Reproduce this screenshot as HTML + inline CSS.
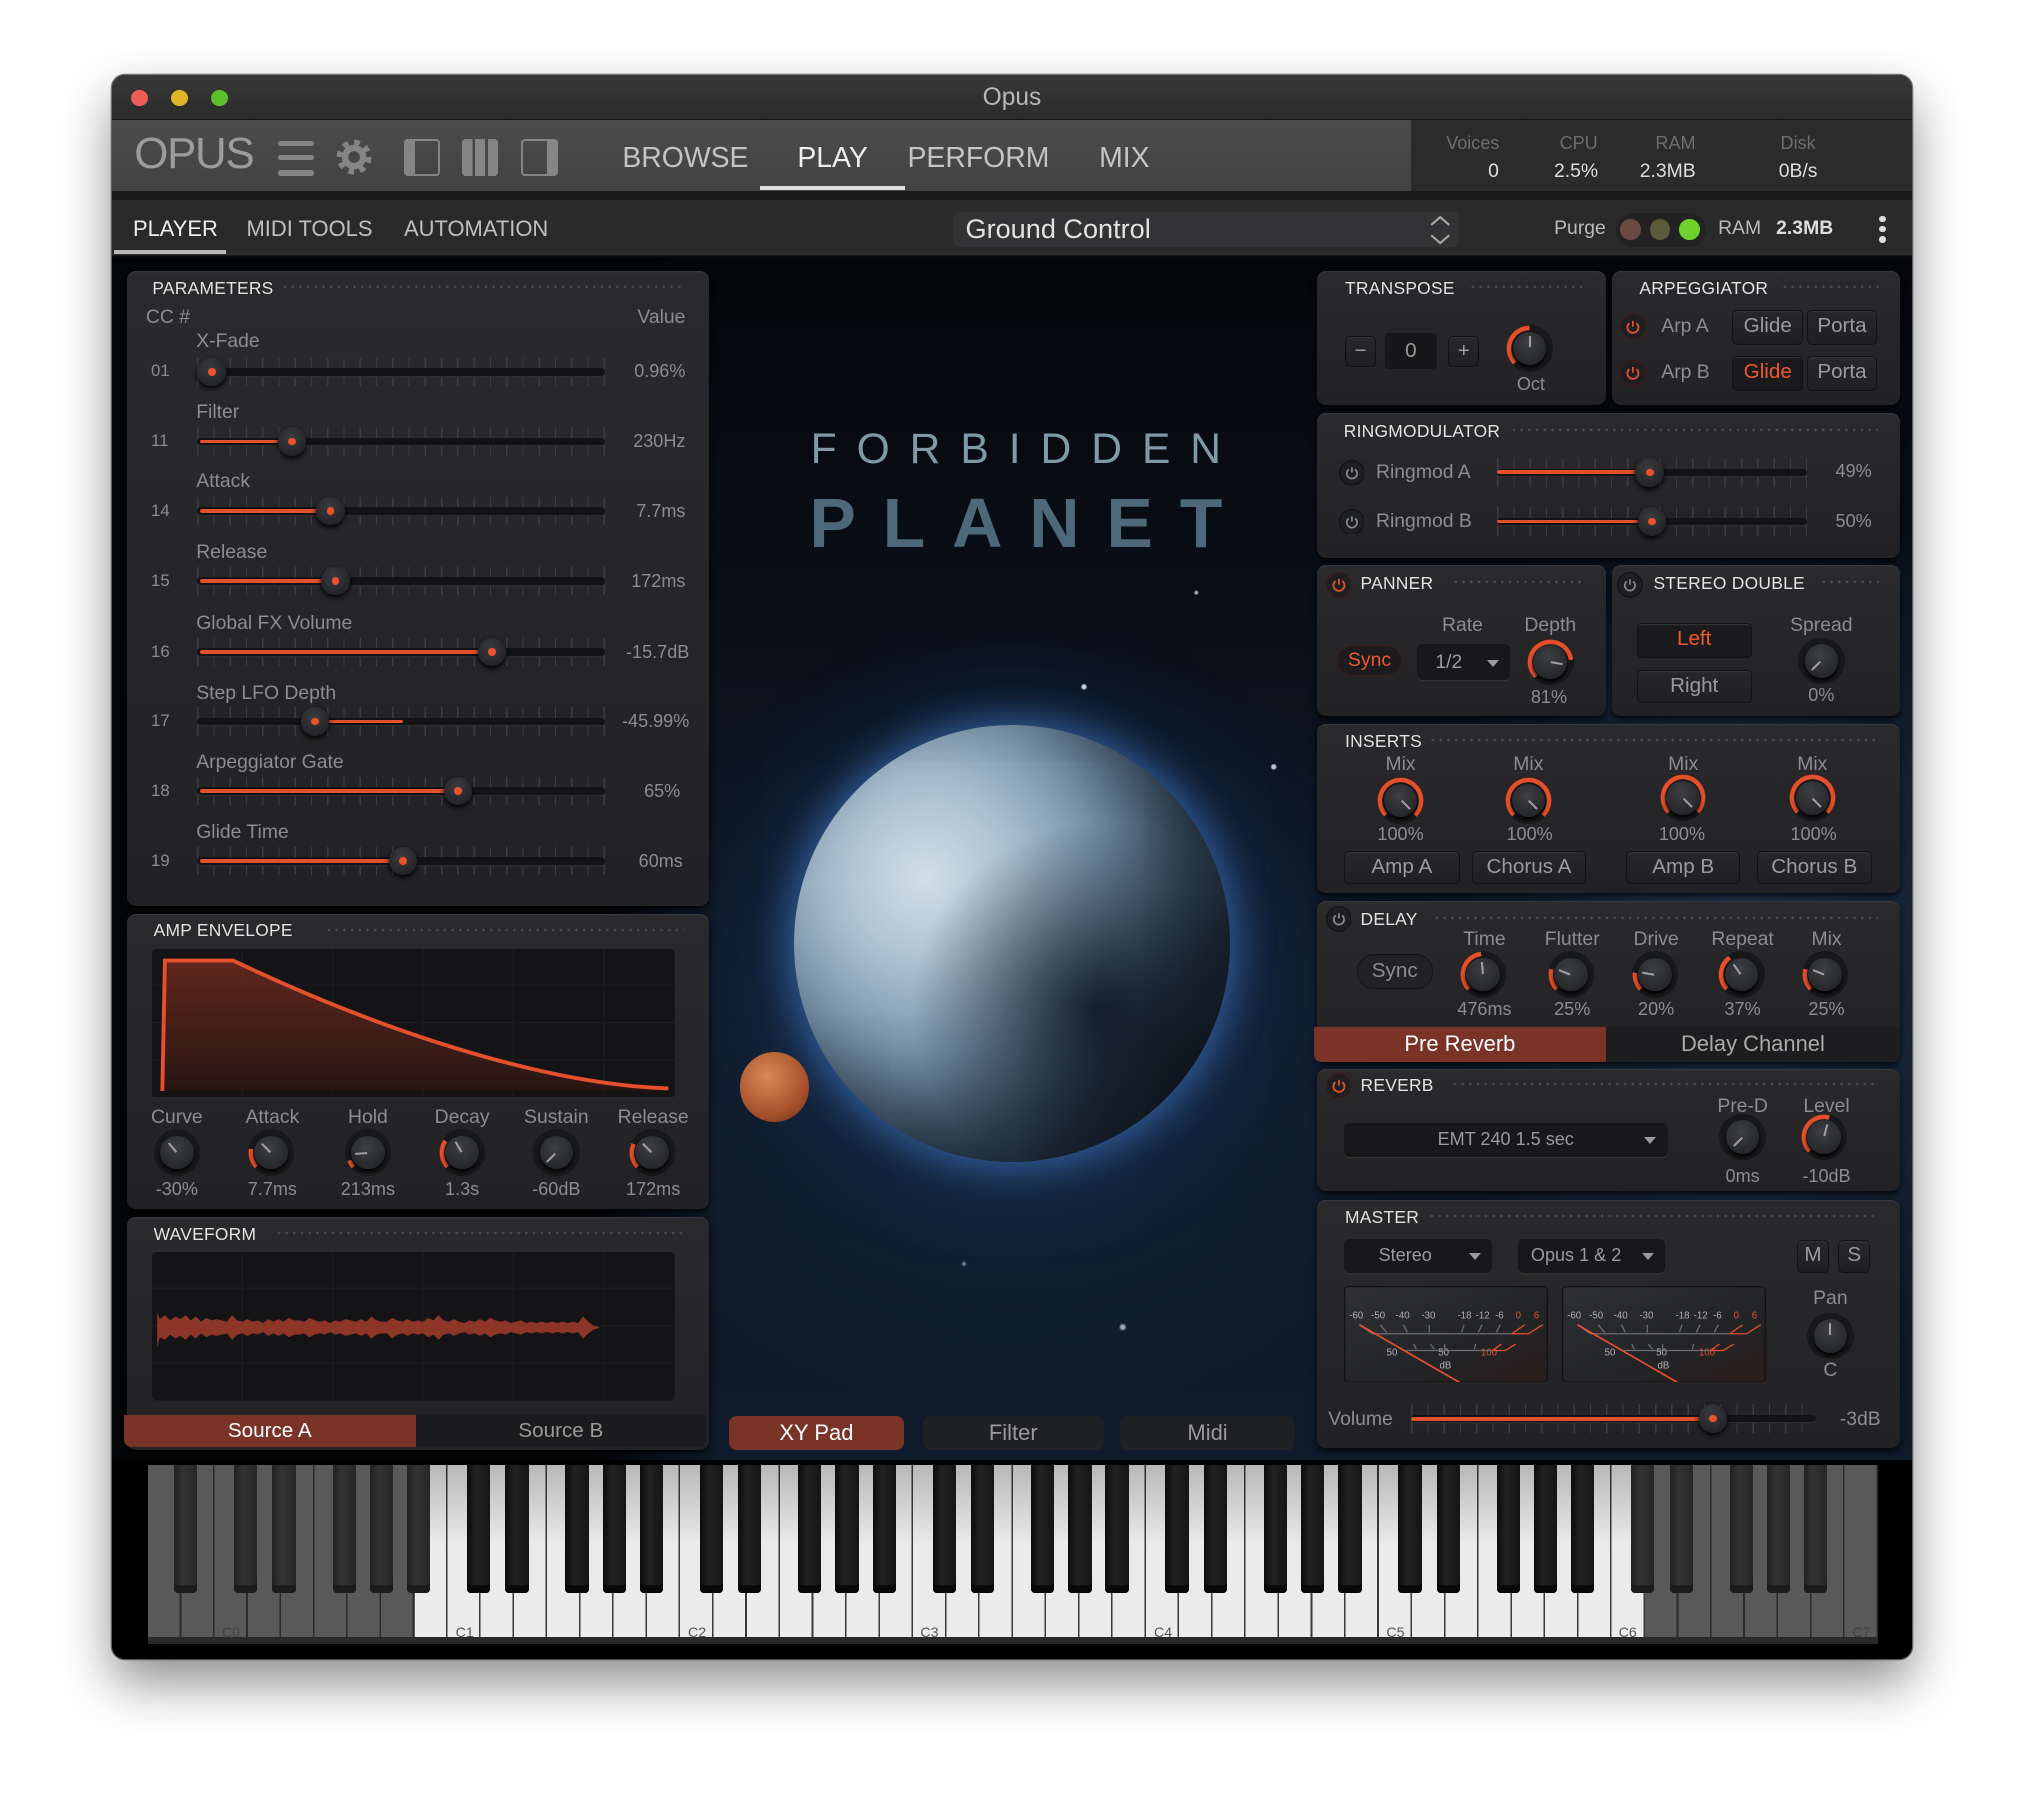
<!DOCTYPE html>
<html><head><meta charset="utf-8">
<style>
*{box-sizing:border-box}
html,body{margin:0;padding:0;background:#fff;overflow:hidden;width:2024px;height:1808px}
#r{zoom:1.29082;width:1568px;height:1401px;position:relative;font-family:"Liberation Sans",sans-serif}
.a{position:absolute}
.c{position:absolute;transform:translateX(-50%);white-space:nowrap}
.rt{position:absolute;transform:translateX(-100%);white-space:nowrap}
.win{left:87px;top:58px;width:1394px;height:1227px;border-radius:10px;overflow:hidden;background:#0a0b0e;box-shadow:0 18px 40px rgba(0,0,0,.45),0 0 0 1px rgba(0,0,0,.5)}
.p{position:absolute;background:linear-gradient(#2a2a2d,#222225);border-radius:7px;box-shadow:inset 0 1px 0 #38383c,0 2px 5px rgba(0,0,0,.8)}
.t{position:absolute;font-size:13.5px;color:#e2e2e2;white-space:nowrap;letter-spacing:.2px}
.d{position:absolute;height:6px;background:radial-gradient(circle,#4a4a50 0.8px,transparent 1.3px) 0 0/6px 6px}
.l{color:#8c8c92;font-size:15px}
.v{color:#8c8c92;font-size:14px}
.sl{position:absolute;height:24px}
.sl .tk{position:absolute;left:0;right:0;top:1px;height:22px;background:repeating-linear-gradient(90deg,#3c3c42 0 1px,transparent 1px 12.6px)}
.sl .tr{position:absolute;left:0;right:0;top:9px;height:6px;background:#131315;border-radius:3px;box-shadow:0 1px 0 #2e2e32}
.sl .fi{position:absolute;top:10.5px;height:3px;background:#e2502c;border-radius:2px}
.sl .th{position:absolute;top:1px;width:22px;height:22px;border-radius:50%;background:radial-gradient(circle at 45% 35%,#3b3c41,#222326 75%);box-shadow:0 2px 4px #000}
.sl .th::after{content:"";position:absolute;left:8px;top:8px;width:6px;height:6px;border-radius:50%;background:#e8522c}
.k{position:absolute;width:36px;height:36px;margin:-18px 0 0 -18px;border-radius:50%;background:#17181a}
.k::before{content:"";position:absolute;inset:0;border-radius:50%;background:conic-gradient(from 225deg,#e4502c 0 var(--v),transparent var(--v) 360deg);-webkit-mask:radial-gradient(closest-side,transparent 76%,#000 79%,#000 95%,transparent 100%);mask:radial-gradient(closest-side,transparent 76%,#000 79%,#000 95%,transparent 100%)}
.k::after{content:"";position:absolute;inset:5px;border-radius:50%;background:radial-gradient(circle at 45% 35%,#3e3f44,#26272a 72%);box-shadow:0 2px 3px #000}
.k i{position:absolute;left:17.25px;top:8px;width:1.5px;height:9px;background:#a0a0a6;transform-origin:50% 10px;transform:rotate(var(--r));z-index:1}
.b{position:absolute;background:linear-gradient(#27272a,#202023);border:1px solid #121214;border-radius:4px;color:#9a9aa0;font-size:16px;text-align:center;box-shadow:inset 0 1px 0 #333337}
.dd{position:absolute;background:#18181a;border-radius:4px;color:#9a9aa0;font-size:14px;text-align:center;box-shadow:0 1px 0 #333}
.dd::after{content:"";position:absolute;right:9px;top:50%;margin-top:-2px;border:5px solid transparent;border-top:6px solid #9a9aa0;border-bottom:0}
.wk{position:absolute;top:0;height:139px}
.bk{position:absolute;top:0;width:18px;height:99px;border-radius:0 0 3px 3px;background:linear-gradient(90deg,#0c0c0c,#222 40%,#151515);box-shadow:inset 0 -6px 0 #080808}
.bk.g{background:linear-gradient(90deg,#222,#333 40%,#262626);box-shadow:inset 0 -6px 0 #1c1c1c}
.cl{position:absolute;bottom:3px;font-size:11px;color:#555}
</style></head><body><div id="r">

<div class="a win">
<div class="a" style="left:0;top:0;width:1394px;height:35px;background:linear-gradient(#383838,#2b2b2b);border-bottom:1px solid #151515"></div>
<div class="a" style="left:14.5px;top:11.5px;width:13px;height:13px;border-radius:50%;background:#ec5f56"></div>
<div class="a" style="left:45.5px;top:11.5px;width:13px;height:13px;border-radius:50%;background:#dfb62a"></div>
<div class="a" style="left:76.5px;top:11.5px;width:13px;height:13px;border-radius:50%;background:#5cbd2d"></div>
<div class="c" style="left:697px;top:7px;font-size:19px;color:#b8b8b8">Opus</div>

<div class="a" style="left:0;top:35px;width:1006px;height:55px;background:linear-gradient(#4c4c4c,#424242)"></div>
<div class="a" style="left:1006px;top:35px;width:388px;height:55px;background:#2b2b2b"></div>
<div class="a" style="left:17px;top:42px;font-size:34px;color:#9c9c9c;letter-spacing:-1px">OPUS</div>
<div class="a" style="left:128px;top:51px;width:28px;height:4px;border-radius:2px;background:#858585"></div>
<div class="a" style="left:128px;top:62px;width:28px;height:4px;border-radius:2px;background:#858585"></div>
<div class="a" style="left:128px;top:74px;width:28px;height:4px;border-radius:2px;background:#858585"></div>
<svg class="a" style="left:173px;top:50px" width="28" height="28" viewBox="-14 -14 28 28"><circle r="11" fill="none" stroke="#858585" stroke-width="5" stroke-dasharray="4.2 4.44"/><circle r="9.5" fill="#858585"/><circle r="4.5" fill="#464646"/></svg>
<div class="a" style="left:226px;top:50px;width:28px;height:28px;border:2px solid #858585;border-radius:3px;border-left:9px solid #858585"></div>
<div class="a" style="left:271px;top:50px;width:28px;height:28px;border-radius:3px;background:linear-gradient(90deg,#858585 0 8px,#464646 8px 10px,#858585 10px 18px,#464646 18px 20px,#858585 20px)"></div>
<div class="a" style="left:317px;top:50px;width:28px;height:28px;border:2px solid #858585;border-radius:3px;border-right:9px solid #858585"></div>
<div class="c" style="left:444px;top:52px;font-size:22px;color:#c4c4c4">BROWSE</div>
<div class="c" style="left:558px;top:52px;font-size:22px;color:#eee">PLAY</div>
<div class="c" style="left:671px;top:52px;font-size:22px;color:#c4c4c4">PERFORM</div>
<div class="c" style="left:784px;top:52px;font-size:22px;color:#c4c4c4">MIX</div>
<div class="a" style="left:502px;top:86px;width:112px;height:3px;background:#ddd"></div>
<div class="c" style="left:1054px;top:45px;font-size:14px;color:#6e6e6e">Voices</div>
<div class="c" style="left:1136px;top:45px;font-size:14px;color:#6e6e6e">CPU</div>
<div class="c" style="left:1211px;top:45px;font-size:14px;color:#6e6e6e">RAM</div>
<div class="c" style="left:1306px;top:45px;font-size:14px;color:#6e6e6e">Disk</div>
<div class="c" style="left:1070px;top:66px;font-size:15px;color:#ddd">0</div>
<div class="c" style="left:1134px;top:66px;font-size:15px;color:#ddd">2.5%</div>
<div class="c" style="left:1205px;top:66px;font-size:15px;color:#ddd">2.3MB</div>
<div class="c" style="left:1306px;top:66px;font-size:15px;color:#ddd">0B/s</div>

<div class="a" style="left:0;top:90px;width:1394px;height:7px;background:#1b1b1b"></div>
<div class="a" style="left:0;top:97px;width:1394px;height:43px;background:#2a2a2a;border-bottom:1px solid #1a1a1a"></div>
<div class="a" style="left:16px;top:109px;font-size:17px;color:#eee">PLAYER</div>
<div class="a" style="left:104px;top:109px;font-size:17px;color:#c0c0c0">MIDI TOOLS</div>
<div class="a" style="left:226px;top:109px;font-size:17px;color:#c0c0c0">AUTOMATION</div>
<div class="a" style="left:1px;top:136px;width:87px;height:3px;background:#bbb"></div>
<div class="a" style="left:651px;top:106px;width:392px;height:27px;background:#333335;border-radius:5px"></div>
<div class="a" style="left:661px;top:107px;font-size:21px;color:#e2e2e2">Ground Control</div>
<svg class="a" style="left:1018px;top:106px" width="22" height="28"><path d="M4 10l7-6 7 6M4 18l7 6 7-6" fill="none" stroke="#aaa" stroke-width="1.6"/></svg>
<div class="a" style="left:1117px;top:110px;font-size:15px;color:#bbb">Purge</div>
<div class="a" style="left:1165px;top:107px;width:70px;height:26px;border-radius:13px;background:#222"></div>
<div class="a" style="left:1168px;top:112px;width:16px;height:16px;border-radius:50%;background:#6b4a42"></div>
<div class="a" style="left:1191px;top:112px;width:16px;height:16px;border-radius:50%;background:#5b5a3a"></div>
<div class="a" style="left:1214px;top:112px;width:16px;height:16px;border-radius:50%;background:#6fd12a"></div>
<div class="a" style="left:1244px;top:110px;font-size:15px;color:#bbb">RAM</div>
<div class="a" style="left:1289px;top:110px;font-size:15px;color:#ddd;font-weight:bold">2.3MB</div>
<div class="a" style="left:1369px;top:109px;width:5px;height:5px;border-radius:50%;background:#ddd"></div>
<div class="a" style="left:1369px;top:117px;width:5px;height:5px;border-radius:50%;background:#ddd"></div>
<div class="a" style="left:1369px;top:125px;width:5px;height:5px;border-radius:50%;background:#ddd"></div>

<div class="a" style="left:0;top:141px;width:1394px;height:932px;background:radial-gradient(ellipse 380px 520px at 1260px 520px,rgba(70,110,160,.35),transparent 70%),radial-gradient(ellipse 500px 400px at 700px 600px,rgba(40,70,110,.35),transparent 75%),linear-gradient(#05070a,#0c1420 45%,#0f1b2b 100%)"></div>
<div class="a" style="left:0;top:141px;width:470px;height:932px;background:linear-gradient(90deg,#050608 80%,rgba(5,6,8,0))"></div>
<div class="a" style="left:0;top:141px;width:1394px;height:932px;background:radial-gradient(circle at 753px 333px,#cde 1.5px,transparent 2.5px),radial-gradient(circle at 700px 408px,#9bd 1.5px,transparent 2.5px),radial-gradient(circle at 900px 395px,#bcd 1.5px,transparent 2.5px),radial-gradient(circle at 940px 452px,#cde 1.5px,transparent 2.5px),radial-gradient(circle at 783px 829px,#9ab 1.5px,transparent 3px),radial-gradient(circle at 660px 780px,#789 1px,transparent 2px),radial-gradient(circle at 840px 260px,#9ab 1px,transparent 2px);"></div>
<div class="a" style="left:541px;top:271px;width:318px;display:flex;justify-content:space-between;font-size:33px;color:#7f99a7"><span>F</span><span>O</span><span>R</span><span>B</span><span>I</span><span>D</span><span>D</span><span>E</span><span>N</span></div>
<div class="a" style="left:540px;top:316px;width:320px;display:flex;justify-content:space-between;font-size:54px;color:#4d6879;font-weight:bold"><span>P</span><span>L</span><span>A</span><span>N</span><span>E</span><span>T</span></div>
<div class="a" style="left:528px;top:504px;width:338px;height:338px;border-radius:50%;background:radial-gradient(circle at 70% 65%,rgba(10,18,30,.85),rgba(10,18,30,0) 45%),radial-gradient(circle at 30% 35%,#d3dee6 0%,#a9bfcf 22%,#7893a9 42%,#445c73 62%,#1f2e40 82%,#142233 100%);box-shadow:0 0 26px 6px rgba(70,130,210,.55),0 0 70px 20px rgba(40,90,170,.25),inset -40px -30px 70px rgba(0,0,0,.5)"></div>
<div class="a" style="left:486px;top:757px;width:54px;height:54px;border-radius:50%;background:radial-gradient(circle at 40% 35%,#d88a55,#a9522d 60%,#6a2c17)"></div>
<div class="a" style="left:478px;top:1039px;width:135px;height:26px;border-radius:6px;background:#7a3427;color:#fff;font-size:17px;text-align:center;line-height:26px">XY Pad</div>
<div class="a" style="left:628px;top:1039px;width:140px;height:26px;border-radius:6px;background:#1f2023;color:#999;font-size:17px;text-align:center;line-height:26px">Filter</div>
<div class="a" style="left:781px;top:1039px;width:135px;height:26px;border-radius:6px;background:#1f2023;color:#999;font-size:17px;text-align:center;line-height:26px">Midi</div>

<div class="a" style="left:0;top:1073px;width:1394px;height:154px;background:#000"></div>
<div class="a" style="left:28px;top:1077px;width:1340px;height:139px;overflow:hidden">
 <div class="wk" style="left:0;width:1340px;background:repeating-linear-gradient(90deg,#ebebeb 0 24.57px,#3a3a3a 24.57px 25.77px)"></div>
 <div class="wk" style="left:0;width:1340px;background:linear-gradient(180deg,rgba(0,0,0,.22),rgba(0,0,0,0) 45%)"></div>
 <div class="wk" style="left:0;width:206.2px;background:repeating-linear-gradient(90deg,#595959 0 24.57px,#2a2a2a 24.57px 25.77px)"></div>
 <div class="wk" style="left:1159.7px;width:181px;background:repeating-linear-gradient(90deg,#595959 0 24.57px,#2a2a2a 24.57px 25.77px)"></div>
 <div class="a" style="left:0;top:133px;width:1340px;height:6px;background:#2a2a2a"></div>
 <div class="cl" style="left:57px;color:#444">C0</div><div class="cl" style="left:238px">C1</div><div class="cl" style="left:418px">C2</div><div class="cl" style="left:598px">C3</div><div class="cl" style="left:779px">C4</div><div class="cl" style="left:959px">C5</div><div class="cl" style="left:1139px">C6</div><div class="cl" style="left:1320px;color:#444">C7</div>
 <div class="bk g" style="left:19.8px"></div>
 <div class="bk g" style="left:66.3px"></div><div class="bk g" style="left:96.1px"></div><div class="bk g" style="left:142.6px"></div><div class="bk g" style="left:171.4px"></div><div class="bk g" style="left:200.2px"></div>
 <div class="bk" style="left:246.7px"></div><div class="bk" style="left:276.5px"></div><div class="bk" style="left:323px"></div><div class="bk" style="left:351.8px"></div><div class="bk" style="left:380.6px"></div>
 <div class="bk" style="left:427.1px"></div><div class="bk" style="left:456.9px"></div><div class="bk" style="left:503.4px"></div><div class="bk" style="left:532.2px"></div><div class="bk" style="left:561px"></div>
 <div class="bk" style="left:607.5px"></div><div class="bk" style="left:637.3px"></div><div class="bk" style="left:683.8px"></div><div class="bk" style="left:712.6px"></div><div class="bk" style="left:741.4px"></div>
 <div class="bk" style="left:787.9px"></div><div class="bk" style="left:817.7px"></div><div class="bk" style="left:864.2px"></div><div class="bk" style="left:893px"></div><div class="bk" style="left:921.8px"></div>
 <div class="bk" style="left:968.3px"></div><div class="bk" style="left:998.1px"></div><div class="bk" style="left:1044.6px"></div><div class="bk" style="left:1073.4px"></div><div class="bk" style="left:1102.2px"></div>
 <div class="bk g" style="left:1148.7px"></div><div class="bk g" style="left:1178.5px"></div><div class="bk g" style="left:1225px"></div><div class="bk g" style="left:1253.8px"></div><div class="bk g" style="left:1282.6px"></div>
</div>
</div>

<div class="p" style="left:98px;top:210px;width:451px;height:492px"></div>
<div class="t" style="left:118px;top:215px">PARAMETERS</div><div class="d" style="left:218px;top:219px;width:312px"></div>
<div class="a l" style="left:113px;top:237px">CC #</div><div class="rt l" style="left:531px;top:237px">Value</div>

<div class="a l" style="left:152px;top:256px">X-Fade</div>
<div class="a l" style="left:152px;top:311px">Filter</div>
<div class="a l" style="left:152px;top:364px">Attack</div>
<div class="a l" style="left:152px;top:419px">Release</div>
<div class="a l" style="left:152px;top:474px">Global FX Volume</div>
<div class="a l" style="left:152px;top:528px">Step LFO Depth</div>
<div class="a l" style="left:152px;top:582px">Arpeggiator Gate</div>
<div class="a l" style="left:152px;top:636px">Glide Time</div>

<div class="a v" style="left:117px;top:280px;font-size:13px">01</div>
<div class="a v" style="left:117px;top:334px;font-size:13px">11</div>
<div class="a v" style="left:117px;top:388px;font-size:13px">14</div>
<div class="a v" style="left:117px;top:442px;font-size:13px">15</div>
<div class="a v" style="left:117px;top:497px;font-size:13px">16</div>
<div class="a v" style="left:117px;top:551px;font-size:13px">17</div>
<div class="a v" style="left:117px;top:605px;font-size:13px">18</div>
<div class="a v" style="left:117px;top:659px;font-size:13px">19</div>

<div class="rt v" style="left:531px;top:280px">0.96%</div>
<div class="rt v" style="left:531px;top:334px">230Hz</div>
<div class="rt v" style="left:531px;top:388px">7.7ms</div>
<div class="rt v" style="left:531px;top:442px">172ms</div>
<div class="rt v" style="left:534px;top:497px">-15.7dB</div>
<div class="rt v" style="left:534px;top:551px">-45.99%</div>
<div class="rt v" style="left:527px;top:605px">65%</div>
<div class="rt v" style="left:529px;top:659px">60ms</div>

<div class="sl" style="left:153px;top:276px;width:316px"><div class="tk"></div><div class="tr"></div><div class="th" style="left:0px"></div></div>
<div class="sl" style="left:153px;top:330px;width:316px"><div class="tk"></div><div class="tr"></div><div class="fi" style="left:2px;width:71px"></div><div class="th" style="left:62px"></div></div>
<div class="sl" style="left:153px;top:384px;width:316px"><div class="tk"></div><div class="tr"></div><div class="fi" style="left:2px;width:101px"></div><div class="th" style="left:92px"></div></div>
<div class="sl" style="left:153px;top:438px;width:316px"><div class="tk"></div><div class="tr"></div><div class="fi" style="left:2px;width:105px"></div><div class="th" style="left:96px"></div></div>
<div class="sl" style="left:153px;top:493px;width:316px"><div class="tk"></div><div class="tr"></div><div class="fi" style="left:2px;width:226px"></div><div class="th" style="left:217px"></div></div>
<div class="sl" style="left:153px;top:547px;width:316px"><div class="tk"></div><div class="tr"></div><div class="fi" style="left:91px;width:68px"></div><div class="th" style="left:80px"></div></div>
<div class="sl" style="left:153px;top:601px;width:316px"><div class="tk"></div><div class="tr"></div><div class="fi" style="left:2px;width:200px"></div><div class="th" style="left:191px"></div></div>
<div class="sl" style="left:153px;top:655px;width:316px"><div class="tk"></div><div class="tr"></div><div class="fi" style="left:2px;width:157px"></div><div class="th" style="left:148px"></div></div>

<div class="p" style="left:98px;top:708px;width:451px;height:229px"></div>
<div class="t" style="left:119px;top:713px">AMP ENVELOPE</div><div class="d" style="left:252px;top:717px;width:278px"></div>
<svg class="a" style="left:118px;top:735px" width="405" height="115"><defs><linearGradient id="eg" x1="0" y1="0" x2="0" y2="1"><stop offset="0" stop-color="#6e2a1e"/><stop offset="1" stop-color="#2a1512"/></linearGradient></defs><rect width="405" height="115" rx="3" fill="#141416"/><path d="M70 0V115M140 0V115M210 0V115M280 0V115M350 0V115M0 28H405M0 57H405M0 86H405" stroke="#1d1d20"/><path d="M8 110L10 9H63C170 60 300 105 400 108V110Z" fill="url(#eg)" opacity=".85"/><path d="M8 110L10 9H63C170 60 300 105 400 108" fill="none" stroke="#e4502c" stroke-width="3"/></svg>
<div class="c l" style="left:137px;top:857px">Curve</div><div class="c l" style="left:211px;top:857px">Attack</div><div class="c l" style="left:285px;top:857px">Hold</div><div class="c l" style="left:358px;top:857px">Decay</div><div class="c l" style="left:431px;top:857px">Sustain</div><div class="c l" style="left:506px;top:857px">Release</div>
<div class="k" style="left:137px;top:893px;--v:0deg;--r:-40deg"><i></i></div>
<div class="k" style="left:210px;top:893px;--v:55deg;--r:-45deg"><i></i></div>
<div class="k" style="left:285px;top:893px;--v:22deg;--r:-95deg"><i></i></div>
<div class="k" style="left:358px;top:893px;--v:80deg;--r:-30deg"><i></i></div>
<div class="k" style="left:431px;top:893px;--v:0deg;--r:-135deg"><i></i></div>
<div class="k" style="left:505px;top:893px;--v:70deg;--r:-45deg"><i></i></div>
<div class="c v" style="left:137px;top:913px">-30%</div><div class="c v" style="left:211px;top:913px">7.7ms</div><div class="c v" style="left:285px;top:913px">213ms</div><div class="c v" style="left:358px;top:913px">1.3s</div><div class="c v" style="left:431px;top:913px">-60dB</div><div class="c v" style="left:506px;top:913px">172ms</div>

<div class="p" style="left:98px;top:943px;width:451px;height:180px"></div>
<div class="t" style="left:119px;top:948px">WAVEFORM</div><div class="d" style="left:213px;top:952px;width:317px"></div>
<svg class="a" style="left:118px;top:970px" width="405" height="115"><rect width="405" height="115" rx="3" fill="#141416"/><path d="M70 0V115M140 0V115M210 0V115M280 0V115M350 0V115M0 28H405M0 57H405M0 86H405" stroke="#1c1c1f"/>
<path d="M4 47L6 52L10 49L14 53L18 50L22 52L26 49L30 53L34 50L38 54L42 51L46 53L50 52L54 53L58 54L62 49L66 53L70 54L74 52L78 54L82 53L86 55L90 52L94 54L98 52L102 54L106 51L110 53L114 53L118 54L122 51L126 53L130 54L134 53L138 55L142 53L146 54L150 52L154 53L158 54L162 52L166 54L170 50L174 53L178 54L182 54L186 51L190 53L194 54L198 52L202 54L206 53L210 54L214 51L218 53L222 49L226 53L230 54L234 52L238 54L242 55L246 53L250 54L254 52L258 54L262 51L266 53L270 54L274 53L278 55L282 54L286 53L290 55L294 54L298 55L302 54L306 55L310 54L314 55L318 54L322 55L326 54L330 55L334 50L338 54L342 57L346 58L346 59L342 60L338 63L334 67L330 62L326 63L322 62L318 63L314 62L310 63L306 62L302 63L298 62L294 63L290 62L286 64L282 63L278 62L274 64L270 63L266 64L262 66L258 63L254 65L250 63L246 64L242 62L238 63L234 65L230 63L226 64L222 68L218 64L214 66L210 63L206 64L202 63L198 65L194 63L190 64L186 67L182 63L178 63L174 64L170 67L166 63L162 65L158 63L154 64L150 65L146 63L142 64L138 62L134 64L130 63L126 64L122 66L118 63L114 64L110 64L106 66L102 63L98 65L94 63L90 65L86 62L82 64L78 63L74 65L70 63L66 64L62 68L58 63L54 64L50 65L46 64L42 66L38 63L34 67L30 64L26 68L22 65L18 67L14 64L10 68L6 66L4 74Z" fill="#8d3526"/></svg>
<div class="a" style="left:96px;top:1096px;width:226px;height:25px;background:#7a3427;border-radius:0 0 0 6px;color:#fff;font-size:16px;text-align:center;line-height:25px">Source A</div>
<div class="a" style="left:322px;top:1096px;width:225px;height:25px;background:#1b1b1d;border-radius:0 0 6px 0;color:#999;font-size:16px;text-align:center;line-height:25px">Source B</div>

<div class="p" style="left:1020px;top:210px;width:224px;height:104px"></div>
<div class="t" style="left:1042px;top:215px">TRANSPOSE</div><div class="d" style="left:1138px;top:219px;width:90px"></div>
<div class="b" style="left:1042px;top:260px;width:24px;height:24px;line-height:21px">−</div>
<div class="a" style="left:1073px;top:258px;width:40px;height:28px;background:#17171a;border-radius:3px;color:#999;font-size:16px;text-align:center;line-height:28px">0</div>
<div class="b" style="left:1122px;top:260px;width:24px;height:24px;line-height:21px">+</div>
<div class="k" style="left:1185px;top:270px;--v:135deg;--r:0deg"><i></i></div>
<div class="c v" style="left:1186px;top:290px">Oct</div>

<div class="p" style="left:1249px;top:210px;width:223px;height:104px"></div>
<div class="t" style="left:1270px;top:215px">ARPEGGIATOR</div><div class="d" style="left:1380px;top:219px;width:78px"></div>
<svg class="a" style="left:1255px;top:243px" width="20" height="20"><circle cx="10" cy="10" r="9.5" fill="#1e1f22" stroke="#3b1a14"/><path d="M7.3 7a4.3 4.3 0 1 0 5.4 0M10 5.3v4.5" stroke="#e4502c" fill="none" stroke-width="1.4"/></svg>
<svg class="a" style="left:1255px;top:279px" width="20" height="20"><circle cx="10" cy="10" r="9.5" fill="#1e1f22" stroke="#3b1a14"/><path d="M7.3 7a4.3 4.3 0 1 0 5.4 0M10 5.3v4.5" stroke="#e4502c" fill="none" stroke-width="1.4"/></svg>
<div class="a l" style="left:1287px;top:244px">Arp A</div><div class="a l" style="left:1287px;top:280px">Arp B</div>
<div class="b" style="left:1342px;top:240px;width:55px;height:27px;line-height:24px">Glide</div>
<div class="b" style="left:1400px;top:240px;width:54px;height:27px;line-height:24px">Porta</div>
<div class="b" style="left:1342px;top:276px;width:55px;height:27px;line-height:24px;color:#ee5a30;background:#1a1a1c">Glide</div>
<div class="b" style="left:1400px;top:276px;width:54px;height:27px;line-height:24px">Porta</div>

<div class="p" style="left:1020px;top:320px;width:452px;height:112px"></div>
<div class="t" style="left:1041px;top:326px">RINGMODULATOR</div><div class="d" style="left:1170px;top:330px;width:285px"></div>
<svg class="a" style="left:1037px;top:356px" width="20" height="20"><circle cx="10" cy="10" r="9.5" fill="#1e1f22" stroke="#121214"/><path d="M7.5 7.3a4 4 0 1 0 5 0M10 5.6v4.2" stroke="#8a8a90" fill="none" stroke-width="1.3"/></svg>
<svg class="a" style="left:1037px;top:394px" width="20" height="20"><circle cx="10" cy="10" r="9.5" fill="#1e1f22" stroke="#121214"/><path d="M7.5 7.3a4 4 0 1 0 5 0M10 5.6v4.2" stroke="#8a8a90" fill="none" stroke-width="1.3"/></svg>
<div class="a l" style="left:1066px;top:357px">Ringmod A</div><div class="a l" style="left:1066px;top:395px">Ringmod B</div>
<div class="sl" style="left:1160px;top:354px;width:240px"><div class="tk"></div><div class="tr"></div><div class="fi" style="left:0;width:118px"></div><div class="th" style="left:107px"></div></div>
<div class="sl" style="left:1160px;top:392px;width:240px"><div class="tk"></div><div class="tr"></div><div class="fi" style="left:0;width:120px"></div><div class="th" style="left:109px"></div></div>
<div class="rt v" style="left:1450px;top:357px">49%</div><div class="rt v" style="left:1450px;top:396px">50%</div>

<div class="p" style="left:1020px;top:438px;width:224px;height:117px"></div>
<svg class="a" style="left:1027px;top:443px" width="20" height="20"><circle cx="10" cy="10" r="9.5" fill="#1e1f22" stroke="#3b1a14"/><path d="M7.3 7a4.3 4.3 0 1 0 5.4 0M10 5.3v4.5" stroke="#e4502c" fill="none" stroke-width="1.4"/></svg>
<div class="t" style="left:1054px;top:444px">PANNER</div><div class="d" style="left:1125px;top:448px;width:104px"></div>
<div class="c l" style="left:1133px;top:476px">Rate</div><div class="c l" style="left:1201px;top:476px">Depth</div>
<div class="a" style="left:1036px;top:500px;width:50px;height:24px;border-radius:12px;background:#1c1c1e;border:1px solid #3a1c15;color:#ee5a30;font-size:15px;text-align:center;line-height:22px">Sync</div>
<div class="dd" style="left:1098px;top:499px;width:72px;height:28px;line-height:28px;text-align:left;padding-left:14px;font-size:15px">1/2</div>
<div class="k" style="left:1201px;top:513px;--v:219deg;--r:100deg"><i></i></div>
<div class="c v" style="left:1200px;top:532px">81%</div>

<div class="p" style="left:1249px;top:438px;width:223px;height:117px"></div>
<svg class="a" style="left:1253px;top:443px" width="20" height="20"><circle cx="10" cy="10" r="9.5" fill="#1e1f22" stroke="#121214"/><path d="M7.5 7.3a4 4 0 1 0 5 0M10 5.6v4.2" stroke="#8a8a90" fill="none" stroke-width="1.3"/></svg>
<div class="t" style="left:1281px;top:444px">STEREO DOUBLE</div><div class="d" style="left:1410px;top:448px;width:48px"></div>
<div class="b" style="left:1268px;top:483px;width:89px;height:27px;line-height:24px;color:#ee5a30;background:#1b1b1d">Left</div>
<div class="b" style="left:1268px;top:519px;width:89px;height:26px;line-height:23px">Right</div>
<div class="c l" style="left:1411px;top:476px">Spread</div>
<div class="k" style="left:1411px;top:512px;--v:0deg;--r:-135deg"><i></i></div>
<div class="c v" style="left:1411px;top:531px">0%</div>

<div class="p" style="left:1020px;top:561px;width:452px;height:131px"></div>
<div class="t" style="left:1042px;top:566px">INSERTS</div><div class="d" style="left:1107px;top:570px;width:348px"></div>
<div class="c l" style="left:1085px;top:583px">Mix</div><div class="c l" style="left:1184px;top:583px">Mix</div><div class="c l" style="left:1304px;top:583px">Mix</div><div class="c l" style="left:1404px;top:583px">Mix</div>
<div class="k" style="left:1085px;top:620px;--v:270deg;--r:135deg"><i></i></div>
<div class="k" style="left:1184px;top:620px;--v:270deg;--r:135deg"><i></i></div>
<div class="k" style="left:1304px;top:618px;--v:270deg;--r:135deg"><i></i></div>
<div class="k" style="left:1404px;top:618px;--v:270deg;--r:135deg"><i></i></div>
<div class="c v" style="left:1085px;top:638px">100%</div><div class="c v" style="left:1185px;top:638px">100%</div><div class="c v" style="left:1303px;top:638px">100%</div><div class="c v" style="left:1405px;top:638px">100%</div>
<div class="b" style="left:1041px;top:659px;width:90px;height:26px;line-height:23px">Amp A</div>
<div class="b" style="left:1140px;top:659px;width:89px;height:26px;line-height:23px">Chorus A</div>
<div class="b" style="left:1260px;top:659px;width:88px;height:26px;line-height:23px">Amp B</div>
<div class="b" style="left:1361px;top:659px;width:89px;height:26px;line-height:23px">Chorus B</div>

<div class="p" style="left:1020px;top:698px;width:452px;height:125px"></div>
<svg class="a" style="left:1027px;top:702px" width="20" height="20"><circle cx="10" cy="10" r="9.5" fill="#1e1f22" stroke="#121214"/><path d="M7.5 7.3a4 4 0 1 0 5 0M10 5.6v4.2" stroke="#8a8a90" fill="none" stroke-width="1.3"/></svg>
<div class="t" style="left:1054px;top:704px">DELAY</div><div class="d" style="left:1110px;top:708px;width:345px"></div>
<div class="a" style="left:1051px;top:739px;width:59px;height:27px;border-radius:13px;background:#222225;border:1px solid #141416;color:#8c8c92;font-size:16px;text-align:center;line-height:25px">Sync</div>
<div class="c l" style="left:1150px;top:719px">Time</div><div class="c l" style="left:1218px;top:719px">Flutter</div><div class="c l" style="left:1283px;top:719px">Drive</div><div class="c l" style="left:1350px;top:719px">Repeat</div><div class="c l" style="left:1415px;top:719px">Mix</div>
<div class="k" style="left:1149px;top:755px;--v:130deg;--r:-5deg"><i></i></div>
<div class="k" style="left:1217px;top:755px;--v:60deg;--r:-68deg"><i></i></div>
<div class="k" style="left:1282px;top:755px;--v:50deg;--r:-80deg"><i></i></div>
<div class="k" style="left:1349px;top:755px;--v:100deg;--r:-35deg"><i></i></div>
<div class="k" style="left:1414px;top:755px;--v:60deg;--r:-68deg"><i></i></div>
<div class="c v" style="left:1150px;top:774px">476ms</div><div class="c v" style="left:1218px;top:774px">25%</div><div class="c v" style="left:1283px;top:774px">20%</div><div class="c v" style="left:1350px;top:774px">37%</div><div class="c v" style="left:1415px;top:774px">25%</div>
<div class="a" style="left:1018px;top:796px;width:226px;height:27px;background:#7a3427;border-radius:0 0 0 6px;color:#fff;font-size:17px;text-align:center;line-height:27px">Pre Reverb</div>
<div class="a" style="left:1244px;top:796px;width:228px;height:27px;background:#1d1d20;border-radius:0 0 6px 0;color:#aaa;font-size:17px;text-align:center;line-height:27px">Delay Channel</div>

<div class="p" style="left:1020px;top:828px;width:452px;height:95px"></div>
<svg class="a" style="left:1027px;top:831px" width="20" height="20"><circle cx="10" cy="10" r="9.5" fill="#1e1f22" stroke="#3b1a14"/><path d="M7.3 7a4.3 4.3 0 1 0 5.4 0M10 5.3v4.5" stroke="#e4502c" fill="none" stroke-width="1.4"/></svg>
<div class="t" style="left:1054px;top:833px">REVERB</div><div class="d" style="left:1124px;top:837px;width:332px"></div>
<div class="dd" style="left:1041px;top:870px;width:251px;height:26px;line-height:26px">EMT 240 1.5 sec</div>
<div class="c l" style="left:1350px;top:848px">Pre-D</div><div class="c l" style="left:1415px;top:848px">Level</div>
<div class="k" style="left:1350px;top:881px;--v:0deg;--r:-135deg"><i></i></div>
<div class="k" style="left:1413px;top:881px;--v:150deg;--r:15deg"><i></i></div>
<div class="c v" style="left:1350px;top:903px">0ms</div><div class="c v" style="left:1415px;top:903px">-10dB</div>

<div class="p" style="left:1020px;top:930px;width:452px;height:192px"></div>
<div class="t" style="left:1042px;top:935px">MASTER</div><div class="d" style="left:1106px;top:939px;width:350px"></div>
<div class="dd" style="left:1041px;top:960px;width:115px;height:26px;line-height:26px;text-align:left;padding-left:27px">Stereo</div>
<div class="dd" style="left:1176px;top:960px;width:114px;height:26px;line-height:26px;text-align:left;padding-left:10px">Opus 1 &amp; 2</div>
<div class="b" style="left:1392px;top:961px;width:25px;height:25px;line-height:22px">M</div>
<div class="b" style="left:1424px;top:961px;width:25px;height:25px;line-height:22px">S</div>
<svg class="a" style="left:1041px;top:996px" width="158" height="75"><defs><linearGradient id="mg" x1="0" y1="0" x2="1" y2="1"><stop offset="0" stop-color="#2f3034"/><stop offset=".6" stop-color="#232428"/><stop offset="1" stop-color="#2a1e1c"/></linearGradient></defs><rect x=".5" y=".5" width="157" height="74" rx="3" fill="url(#mg)" stroke="#111"/><g font-size="7.5" fill="#b0b0b4" font-family="Liberation Sans"><text x="4" y="25">-60</text><text x="21" y="25">-50</text><text x="40" y="25">-40</text><text x="60" y="25">-30</text><text x="88" y="25">-18</text><text x="102" y="25">-12</text><text x="117" y="25">-6</text><text x="133" y="25" fill="#e4502c">0</text><text x="147" y="25" fill="#e4502c">6</text><text x="33" y="54">50</text><text x="73" y="54">50</text><text x="106" y="54" fill="#e4502c">100</text><text x="74" y="64">dB</text></g><path d="M12 30L22 37H130M28 30L33 36M46 30L49 36M66 30L66 36M93 30L91 36M107 30L104 36M121 30L118 36M48 50H120M54 45L56 49M67 45L70 49M78 45L78 49M102 45L101 49" stroke="#6c6d73" fill="none"/><path d="M130 37L140 30M130 37H143L154 30M115 50L122 45M115 50H125L133 45" stroke="#e4502c" fill="none"/><path d="M12 30L90 75" stroke="#e4502c" stroke-width="1.3"/></svg>
<svg class="a" style="left:1210px;top:996px" width="158" height="75"><rect x=".5" y=".5" width="157" height="74" rx="3" fill="url(#mg)" stroke="#111"/><g font-size="7.5" fill="#b0b0b4" font-family="Liberation Sans"><text x="4" y="25">-60</text><text x="21" y="25">-50</text><text x="40" y="25">-40</text><text x="60" y="25">-30</text><text x="88" y="25">-18</text><text x="102" y="25">-12</text><text x="117" y="25">-6</text><text x="133" y="25" fill="#e4502c">0</text><text x="147" y="25" fill="#e4502c">6</text><text x="33" y="54">50</text><text x="73" y="54">50</text><text x="106" y="54" fill="#e4502c">100</text><text x="74" y="64">dB</text></g><path d="M12 30L22 37H130M28 30L33 36M46 30L49 36M66 30L66 36M93 30L91 36M107 30L104 36M121 30L118 36M48 50H120M54 45L56 49M67 45L70 49M78 45L78 49M102 45L101 49" stroke="#6c6d73" fill="none"/><path d="M130 37L140 30M130 37H143L154 30M115 50L122 45M115 50H125L133 45" stroke="#e4502c" fill="none"/><path d="M12 30L90 75" stroke="#e4502c" stroke-width="1.3"/></svg>
<div class="c l" style="left:1418px;top:997px">Pan</div>
<div class="k" style="left:1418px;top:1035px;--v:0deg;--r:0deg"><i></i></div>
<div class="c l" style="left:1418px;top:1053px">C</div>
<div class="a l" style="left:1029px;top:1091px">Volume</div>
<div class="sl" style="left:1093px;top:1087px;width:314px"><div class="tk"></div><div class="tr"></div><div class="fi" style="left:0;width:234px"></div><div class="th" style="left:223px"></div></div>
<div class="rt l" style="left:1457px;top:1091px">-3dB</div>

</div></body></html>
